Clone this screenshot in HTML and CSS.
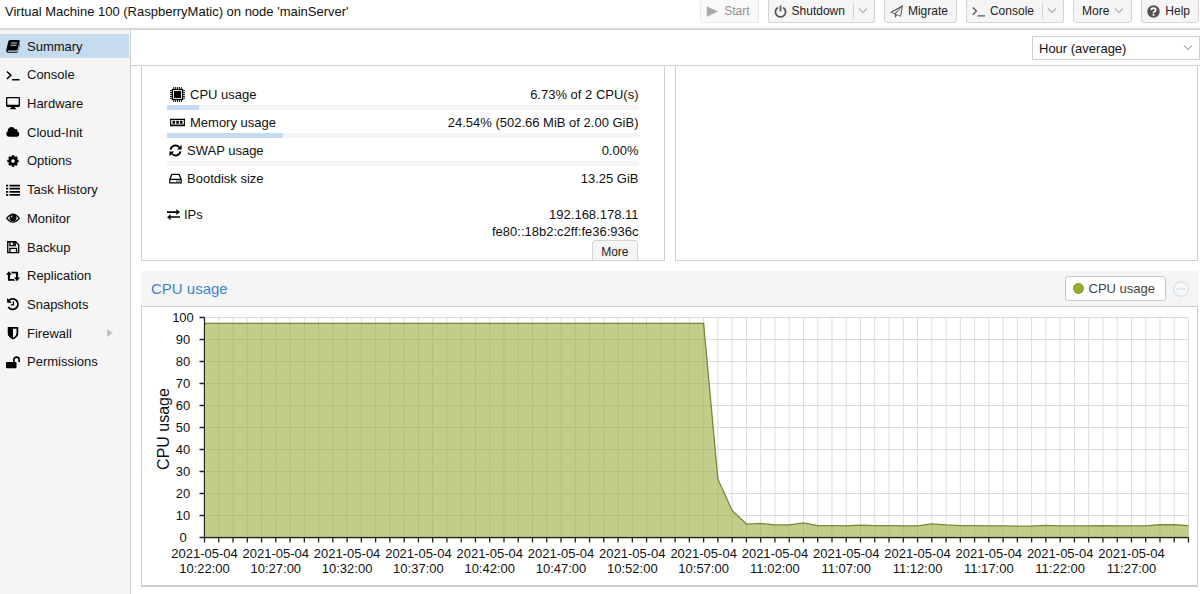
FILE: index.html
```html
<!DOCTYPE html>
<html lang="en">
<head>
<meta charset="utf-8">
<title>Virtual Machine 100</title>
<link rel="stylesheet" href="styles.css">
</head>
<body>
<header class="topbar">
  <h1 class="title">Virtual Machine 100 (RaspberryMatic) on node 'mainServer'</h1>
  <div class="actions">
    <button class="btn" type="button" disabled>
      <svg class="icon" viewBox="0 0 16 16"><path d="M1 1.500L15 8 1 14.500z"/></svg>Start</button>
    <div class="split">
      <button class="btn" type="button">
        <svg class="icon line" viewBox="0 0 16 16"><path stroke-width="2.200" d="M4.800 3a6.300 6.300 0 1 0 6.400 0M8 .500v7.500"/></svg>Shutdown</button>
      <button class="btn arrow" type="button" aria-label="Shutdown options"><svg class="chev" viewBox="0 0 10 6"><path d="M1 .500l4 4 4-4"/></svg></button>
    </div>
    <button class="btn" type="button">
      <svg class="icon" viewBox="0 0 16 16"><path fill-rule="evenodd" d="M16 0l-2.500 14.500-4.800-2L6 16v-4.600L0 9zM2.600 8.900l3.100 1.300L13 3.800zM7 11l5.600 2.200L14.400 2.600z"/></svg>Migrate</button>
    <div class="split">
      <button class="btn" type="button">
        <svg class="icon line" viewBox="0 0 16 16"><path stroke-width="1.600" d="M1 3l4.500 4.500L1 12M7 13.500h9"/></svg>Console</button>
      <button class="btn arrow" type="button" aria-label="Console options"><svg class="chev" viewBox="0 0 10 6"><path d="M1 .500l4 4 4-4"/></svg></button>
    </div>
    <button class="btn" type="button">More<svg class="chev" viewBox="0 0 10 6"><path d="M1 .500l4 4 4-4"/></svg></button>
    <button class="btn" type="button">
      <svg class="icon" viewBox="0 0 16 16"><circle cx="8" cy="8" r="7.700"/><path fill="none" stroke="#fff" stroke-width="2.200" d="M5.300 6.200C5.300 3 10.700 3 10.700 6c0 2-2.700 1.700-2.700 4M8 11.200v2"/></svg>Help</button>
  </div>
</header>

<div class="workspace">
  <nav class="sidebar" aria-label="Virtual machine">
    <ul class="menu">
      <li><a class="item selected" href="#"><svg class="icon" viewBox="0 0 16 16"><path fill-rule="evenodd" d="M5 1h9.500q1.500 0 1.200 1.500L13.200 12q-.4 1-1.500 1H3q-1 .1-1 .8 0 .7 1 .7h9.500q.7 0 1-.8L15.800 5q.5 1 .2 1.600l-2.400 8q-.4 1.200-1.600 1.200H2.500Q0 15.800.2 13L2.700 2.600Q3.300 1 5 1zM6 4l-.3 1.200h6.800l.3-1.200zM5.300 6.500L5 7.700h6.800l.3-1.200z"/></svg>Summary</a></li>
      <li><a class="item" href="#"><svg class="icon line" viewBox="0 0 16 16"><path stroke-width="1.700" d="M1 4l4.500 4.300L1 12.500M7 13.500h8.500"/></svg>Console</a></li>
      <li><a class="item" href="#"><svg class="icon" viewBox="0 0 16 16"><path fill-rule="evenodd" d="M1.300 1h13.400Q16 1 16 2.300v8.900q0 1.300-1.300 1.300H10l.5 1.500h1v1h-7v-1h1l.5-1.500H1.300Q0 12.500 0 11.200V2.300Q0 1 1.300 1zm.2 1.500V10h13V2.500z"/></svg>Hardware</a></li>
      <li><a class="item" href="#"><svg class="icon" viewBox="0 0 16 16"><path d="M3.500 13.500A3.500 3.500 0 0 1 2 7C1.800 1.500 8.800.800 10.200 5c1.800-1 3.500.700 2.900 2.400A3.200 3.200 0 0 1 12.800 13.500z"/></svg>Cloud-Init</a></li>
      <li><a class="item" href="#"><svg class="icon" viewBox="0 0 16 16"><path fill="none" stroke="currentColor" stroke-width="3" d="M8 1.500v2.500M8 12v2.500M1.500 8H4M12 8h2.500M3.400 3.400l1.800 1.800M10.800 10.800l1.800 1.800M3.400 12.600l1.800-1.800M10.800 5.200l1.800-1.800"/><circle cx="8" cy="8" r="3.600" fill="none" stroke="currentColor" stroke-width="3"/></svg>Options</a></li>
      <li><a class="item" href="#"><svg class="icon" viewBox="0 0 16 16"><path d="M0 2h2.500v2H0zM4 2h12v2H4zM0 5.500h2.500v2H0zM4 5.500h12v2H4zM0 9h2.500v2H0zM4 9h12v2H4zM0 12.500h2.500v2H0zM4 12.500h12v2H4z"/></svg>Task History</a></li>
      <li><a class="item" href="#"><svg class="icon" viewBox="0 0 16 16"><path class="line" stroke-width="1.500" d="M.800 8.500q7.200-10 14.400 0-7.200 8.500-14.400 0z"/><path fill-rule="evenodd" d="M8 3.700a4 4 0 1 1 0 8 4 4 0 0 1 0-8zm0 1.300a2.600 2.600 0 0 0-2.500 2.500h1Q6.600 6 8 6z"/></svg>Monitor</a></li>
      <li><a class="item" href="#"><svg class="icon line" viewBox="0 0 16 16"><path stroke-width="1.500" d="M2 2h9l3.500 3.500V14.500H2zM4.500 2v4.500h6V2M4.500 14.500v-5h7.500v5"/><path stroke-width="2" d="M8.800 2.500v3"/></svg>Backup</a></li>
      <li><a class="item" href="#"><svg class="icon" viewBox="0 0 16 16"><path d="M3.300 2.500L0 6.700h2.200v6.200q0 .6.600.6h7.700l-1.700-2.200H4.600V6.700h2.100zM5.500 3l1.700 2.200h4.200v4.600H9.200l3.400 4.200 3.400-4.200h-2.200V3.600q0-.6-.6-.6z"/></svg>Replication</a></li>
      <li><a class="item" href="#"><svg class="icon" viewBox="0 0 16 16"><path class="line" stroke-width="2.100" d="M3.200 4.200a6 6 0 1 1-.6 7.200"/><path d="M1.300 1v5.500h5.500z"/><path class="line" stroke-width="1.500" d="M8.500 5v4H5.500"/></svg>Snapshots</a></li>
      <li><a class="item" href="#"><svg class="icon" viewBox="0 0 16 16"><path fill-rule="evenodd" d="M2 1h12v7.500q0 4-6 7-6-3-6-7zm6 2v10.300q4-2.300 4-4.800V3z"/></svg>Firewall<svg class="expand" viewBox="0 0 6 8"><path d="M0 0l6 4-6 4z"/></svg></a></li>
      <li><a class="item" href="#"><svg class="icon" viewBox="0 0 16 16"><path d="M1 8h10q1 0 1 1v5q0 1-1 1H1q-1 0-1-1V9q0-1 1-1z"/><path class="line" stroke-width="1.900" d="M9 8V5.500a3 3 0 0 1 6 0V8"/></svg>Permissions</a></li>
    </ul>
  </nav>

  <main class="content">
    <div class="toolbar">
      <select class="range" aria-label="Time range"><option>Hour (average)</option></select>
      <svg class="chev range-arrow" viewBox="0 0 10 6"><path d="M1 .500l4 4 4-4"/></svg>
    </div>
    <div class="panels">
      <section class="panel status" aria-label="Status">
        <div class="stat wide"><span class="label"><svg class="icon" viewBox="0 0 16 16"><path class="line" stroke-width="1" d="M4 0v16M6 0v16M8 0v16M10 0v16M12 0v16M0 4h16M0 6h16M0 8h16M0 10h16M0 12h16"/><path d="M2 2h12v12H2z"/><path fill="none" stroke="#fff" d="M3.700 3.700h8.600v8.600H3.700z"/></svg>CPU usage</span><span>6.73% of 2 CPU(s)</span></div>
        <div class="bar"><div class="fill" style="width:6.73%"></div></div>
        <div class="stat wide"><span class="label"><svg class="icon" viewBox="0 0 16 16"><path fill-rule="evenodd" d="M0 4h16v2.500q-1 .5 0 1.500v4H0V8q1-1 0-1.500zM1.300 5.200v5h13.400v-5z"/><path d="M2.700 6.200h2.700v3H2.700zM6.700 6.200h2.700v3H6.700zM10.600 6.200h2.700v3h-2.700z"/></svg>Memory usage</span><span>24.54% (502.66 MiB of 2.00 GiB)</span></div>
        <div class="bar"><div class="fill" style="width:24.54%"></div></div>
        <div class="stat"><span class="label"><svg class="icon" viewBox="0 0 16 16"><path class="line" stroke-width="2.300" d="M2 7a6 6 0 0 1 10.500-3M14 9A6 6 0 0 1 3.500 12"/><path d="M15.500 1v5.800H9.700zM.500 15V9.200h5.800z"/></svg>SWAP usage</span><span>0.00%</span></div>
        <div class="bar"></div>
        <div class="stat"><span class="label"><svg class="icon line" viewBox="0 0 16 16"><path stroke-width="1.500" d="M1 9l2.500-6h9L15 9v4.500H1zM1 9h14"/><path stroke-width="1.500" d="M9 11.300h1.500M11.700 11.300h1.500"/></svg>Bootdisk size</span><span>13.25 GiB</span></div>
        <div class="stat ips"><span class="label"><svg class="icon" viewBox="0 0 16 16"><path d="M0 4h11.500V1.500L16 5l-4.500 3.500V6H0zM16 10H4.500V7.800L0 11.300l4.500 3.500V12H16z"/></svg>IPs</span><span class="addresses">192.168.178.11<br>fe80::18b2:c2ff:fe36:936c</span></div>
        <button class="btn more" type="button">More</button>
      </section>
      <section class="panel" aria-label="Notes"></section>
    </div>
    <section class="chart-panel">
      <div class="chart-head">
        <h2 class="chart-title">CPU usage</h2>
        <button class="legend" type="button"><span class="dot"></span>CPU usage</button>
        <button class="collapse" type="button" aria-label="Collapse"><svg viewBox="0 0 16 16"><circle cx="8" cy="8" r="7.300"/><path d="M3 8h10"/></svg></button>
      </div>
      <div class="chart-body">
        <svg class="chart" id="chart" viewBox="0 0 1055 278" role="img" aria-label="CPU usage over time"></svg>
      </div>
    </section>
  </main>
</div>
<script src="chart.js"></script>
</body>
</html>
```
FILE: styles.css
```css
* { box-sizing: border-box; }

body {
  margin: 0;
  min-height: 100vh;
  display: flex;
  flex-direction: column;
  overflow: hidden;
  background: #fff;
  color: #111;
  font: 13px/17px "Liberation Sans", Arial, sans-serif;
}

button, select { font: inherit; color: inherit; }

.icon { width: 14px; height: 14px; flex: none; fill: currentColor; }
.line { fill: none; stroke: currentColor; }
.chev { width: 10px; height: 6px; fill: none; stroke: #b5b5b5; stroke-width: 1.3; }

.topbar {
  height: 30px;
  display: flex;
  justify-content: space-between;
  align-items: flex-start;
  padding: 0 1px 0 5px;
  border-bottom: 2px solid #d8d8d8;
}
.title { margin: 3px 0 0; font-size: 13px; font-weight: normal; white-space: nowrap; }
.actions { display: flex; gap: 9px; }

.btn {
  height: 24px;
  margin-top: -1px;
  padding: 0 8px 0 5px;
  display: flex;
  align-items: center;
  gap: 5px;
  border: 1px solid #d4d4d4;
  border-radius: 3px;
  background: #f5f5f5;
  font-size: 12px;
  color: #222;
}
.btn .icon { width: 13px; height: 13px; color: #555; }
.btn .chev { margin-right: -1px; }
.btn:last-child { padding-right: 8px; }
.btn:disabled { opacity: .5; }
.btn:not(:has(.icon)) { padding-left: 8px; }
.split { display: flex; }
.split .btn:first-child { border-right: 0; border-radius: 3px 0 0 3px; }
.split .arrow { padding: 0 7px 0 0; border-left: 0; border-radius: 0 3px 3px 0; gap: 0; }
.split .btn.arrow { padding-left: 0; }
.arrow::before { content: ""; width: 1px; height: 16px; margin-right: 4px; background: #d4d4d4; }

.workspace { flex: 1; display: flex; }

.sidebar { width: 131px; flex: none; background: #f5f5f5; border-right: 1px solid #cfcfcf; }
.menu {
  list-style: none;
  margin: 0;
  padding: 4px 0 0;
  height: 344px;
  display: flex;
  flex-direction: column;
  justify-content: space-between;
}
.item {
  height: 24px;
  margin-right: 1px;
  padding: 0 16px 0 6px;
  display: flex;
  align-items: center;
  gap: 7px;
  color: #111;
  text-decoration: none;
}
.item .icon { color: #000; }
.selected { background: #c5dbef; }
.expand { width: 6px; height: 8px; margin-left: auto; fill: #c2c2c2; }

.content { flex: 1; min-width: 0; }
.toolbar {
  position: relative;
  height: 36px;
  padding-top: 6px;
  display: flex;
  justify-content: flex-end;
  align-items: flex-start;
  border-bottom: 1px solid #cfcfcf;
}
.range {
  width: 168px;
  height: 24px;
  padding: 0 6px;
  appearance: none;
  border: 1px solid #cfcfcf;
  border-radius: 0;
  background: #fff;
}
.range-arrow { position: absolute; right: 7px; top: 15px; }

.panels {
  display: grid;
  grid-template-columns: 1fr 1fr;
  gap: 10px;
  padding: 0 2px 0 10px;
}
.panel { height: 195px; overflow: hidden; border: 1px solid #cfcfcf; border-top: 0; }
.status { padding: 17px 25px 0; }

.stat { height: 22px; display: flex; justify-content: space-between; align-items: center; }
.label { display: flex; align-items: center; gap: 5px; padding-left: 2px; }
.stat .icon { width: 13px; height: 13px; color: #000; }
.wide .label { padding-left: 3px; }
.wide .icon { width: 15px; height: 15px; }
.bar { height: 5px; margin-bottom: 1px; background: #f5f5f5; }
.fill { height: 100%; background: #c5dbef; }
.ips { height: auto; margin-top: 17px; align-items: flex-start; }
.ips .label { padding-left: 0; gap: 4px; }
.addresses { text-align: right; }
.more { margin: 0 1px 0 auto; }

.chart-panel { margin: 10px 2px 0 10px; }
.chart-head { height: 35px; display: flex; align-items: center; padding: 0 9px 0 10px; background: #f5f5f5; }
.chart-title { margin: 0 auto 0 0; font-size: 15px; font-weight: normal; color: #3d85cf; }
.legend {
  height: 25px;
  padding: 0 10px 0 7px;
  display: flex;
  align-items: center;
  gap: 5px;
  border: 1px solid #c8c8c8;
  border-radius: 3px;
  background: #fff;
  color: #444;
}
.dot { width: 11px; height: 11px; border: 1px solid #81962a; border-radius: 50%; background: #99ac2e; }
.collapse { width: 16px; height: 16px; margin-left: 7px; padding: 0; border: 0; background: none; }
.collapse svg { display: block; fill: #f8f8f8; stroke: #c9d9ec; }
.chart-body { border: 1px solid #cfcfcf; border-bottom-width: 2px; }

.chart { display: block; width: 100%; height: auto; font-size: 13px; fill: #111; text-anchor: middle; }
.grid { fill: none; stroke: #dcdcdc; }
.area { fill: #99ac3a; fill-opacity: .6; }
.glow { fill: none; stroke: #e4eb9c; }
.curve { fill: none; stroke: #76893a; stroke-width: 1.3; }
.axis { fill: none; stroke: #222; stroke-width: 1.3; }
.axis-title { font-size: 16px; }
```
FILE: chart.js
```js
const values = [
  ...Array(36).fill(97.3), 26.5, 12.3, 6.1, 6.4, 5.7, 5.7, 6.6, 5.4, 5.4, 5.3,
  5.6, 5.4, 5.4, 5.3, 5.3, 6.2, 5.7, 5.4, 5.4, 5.3, 5.3, 5.2, 5.2, 5.5, 5.3, 5.3,
  5.3, 5.4, 5.3, 5.3, 5.3, 5.8, 5.8, 5.4
];
const left = 62.5, right = 1046.5, top0 = 10.5, bottom = 230.5;
const px = i => left + i * (right - left) / (values.length - 1);
const py = v => bottom - v * (bottom - top0) / 100;

let grid = "", ticks = "", labels = "";
for (let i = 0; i < values.length; i++) {
  grid += `M${px(i)} ${top0}V${bottom}`;
  ticks += `M${px(i)} ${bottom}v5`;
  if (i % 5 === 0 && i <= 65) {
    const minutes = 22 + i;
    const time = `${10 + Math.floor(minutes / 60)}:${String(minutes % 60).padStart(2, "0")}:00`;
    labels += `<text x="${px(i)}" y="251">2021-05-04</text><text x="${px(i)}" y="266">${time}</text>`;
  }
}
for (let v = 0; v <= 100; v += 10) {
  grid += `M${left} ${py(v)}H${right}`;
  ticks += `M${left - 5} ${py(v)}h5`;
  labels += `<text x="41" y="${py(v) + 4}">${v}</text>`;
}
const points = values.map((v, i) => `${px(i)},${py(v)}`).join(" ");

document.getElementById("chart").innerHTML = `
  <path class="grid" d="${grid}"/>
  <polygon class="area" points="${left},${bottom} ${points} ${right},${bottom}"/>
  <path class="glow" d="M${left + 1} ${py(96)}V${bottom - 1}H${right}"/>
  <polyline class="curve" points="${points}"/>
  <path class="axis" d="M${left} ${top0}V${bottom}H${right}${ticks}"/>
  ${labels}
  <text class="axis-title" transform="translate(27 122) rotate(-90)">CPU usage</text>`;
```
